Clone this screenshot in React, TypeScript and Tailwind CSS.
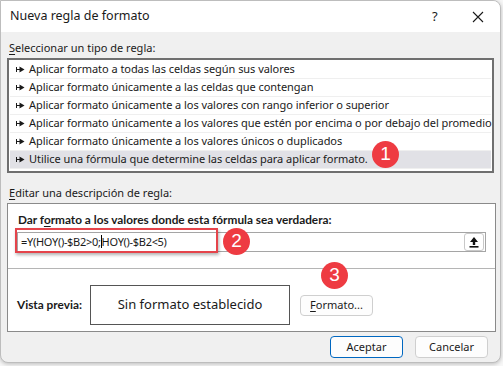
const FONT = "font-['Segoe_UI','Noto_Sans',sans-serif]";
const BOLD = "font-['Lato',sans-serif] font-bold text-[11.8px]";

const rules = [
  "Aplicar formato a todas las celdas según sus valores",
  "Aplicar formato únicamente a las celdas que contengan",
  "Aplicar formato únicamente a los valores con rango inferior o superior",
  "Aplicar formato únicamente a los valores que estén por encima o por debajo del promedio",
  "Aplicar formato únicamente a los valores únicos o duplicados",
  "Utilice una fórmula que determine las celdas para aplicar formato.",
];

function RuleArrow() {
  return (
    <svg width="9" height="7" viewBox="0 0 9 7" className="shrink-0">
      <path d="M0.5 1v5M0.5 3.5H4" stroke="#1a1a1a" strokeWidth="1" fill="none" />
      <path d="M3.5 0.5L8.5 3.5L3.5 6.5Z" fill="#1a1a1a" />
    </svg>
  );
}

function Badge({ n, className }: { n: string; className: string }) {
  return (
    <div
      className={`absolute flex h-[27px] w-[27px] items-center justify-center rounded-full bg-[#ee3b42] font-['Liberation_Sans',sans-serif] text-[19px] text-white ${className}`}
    >
      {n}
    </div>
  );
}

export default function App() {
  return (
    <div className={`relative h-[366px] w-[503px] overflow-hidden bg-[#f7f7f7] ${FONT} text-[11px] text-[#1a1a1a]`}>
      <div className="flex h-[363px] w-[501px] flex-col overflow-hidden rounded-b-[8px] rounded-tr-[8px] border border-[#bdbdbd] bg-[#f0f0f0] shadow-[0_1px_4px_rgba(0,0,0,0.25)]">
        {/* barra de título */}
        <div className="flex h-[31px] shrink-0 items-center bg-white pl-[9px]">
          <span className="flex-1 text-[12.5px]">Nueva regla de formato</span>
          <span className="w-[30px] text-[13px]">?</span>
          <svg width="12" height="12" viewBox="0 0 12 12" className="mr-[16px] ml-[10px]">
            <path d="M1 1L11 11M11 1L1 11" stroke="#1a1a1a" strokeWidth="1.1" />
          </svg>
        </div>

        <div className="flex flex-1 flex-col px-[6px] pt-[8px]">
          <div className="h-[16px] pl-[2px] leading-[16px]">
            <span className="underline underline-offset-2">S</span>eleccionar un tipo de regla:
          </div>
          <div className="mt-[2px] h-[115px] border-2 border-[#6f6f6f] bg-white p-px">
            {rules.map((r, i) => (
              <div
                key={i}
                className={`flex h-[18px] items-center gap-[4px] border-b border-[#efefef] pl-[6px] tracking-[-0.05px] ${
                  i === 5 ? "bg-[#e1e1e6]" : ""
                }`}
              >
                <RuleArrow />
                <span className="whitespace-nowrap">{r}</span>
              </div>
            ))}
          </div>

          <div className="mt-[12px] h-[16px] pl-[2px] leading-[16px]">
            <span className="underline underline-offset-2">E</span>ditar una descripción de regla:
          </div>
          <div className="mt-[2px] flex h-[129px] w-[489px] flex-col border border-[#8a8a8a] bg-white">
            <div className={`mt-[8px] h-[16px] pl-[10px] leading-[16px] ${BOLD}`}>
              Dar f<span className="underline underline-offset-2">o</span>rmato a los valores donde esta fórmula sea verdadera:
            </div>
            <div className="mx-[9px] mt-[4px] flex h-[20px] items-center border border-[#a5a5a5] pl-[3px] pr-[1px]">
              <span className="flex-1 whitespace-nowrap tracking-[-0.3px]">
                =Y(HOY()-$B2&gt;0;<span className="inline-block h-[13px] w-px translate-y-[2px] bg-black" />HOY()-$B2&lt;5)
              </span>
              <div className="flex h-[18px] w-[20px] items-center justify-center rounded-[3px] border border-[#c8c8c8] bg-white">
                <svg width="10" height="12" viewBox="0 0 10 12">
                  <path d="M5 1L9 6H6.2V9H3.8V6H1Z" fill="#111" />
                  <rect x="0.5" y="10" width="9" height="1.6" fill="#111" />
                </svg>
              </div>
            </div>
            <div className="mt-[16px] h-px bg-[#b5b5b5]" />
            <div className="flex items-center pl-[9px] pt-[16px]">
              <span className={`w-[73px] ${BOLD}`}>Vista previa:</span>
              <div className="flex h-[40px] w-[200px] items-center justify-center border border-[#555] text-[13px]">
                Sin formato establecido
              </div>
              <button className="ml-[10px] h-[21px] w-[73px] rounded-[4px] border border-[#cfcfcf] bg-[#fdfdfd] text-[11px]">
                <span className="underline underline-offset-2">F</span>ormato...
              </button>
            </div>
          </div>

          <div className="mt-[4px] flex justify-end gap-[12px] pr-[6px]">
            <button className="h-[22px] w-[73px] rounded-[4px] border border-[#0067c0] bg-[#fdfdfd] text-[11px]">
              Aceptar
            </button>
            <button className="h-[22px] w-[73px] rounded-[4px] border border-[#cfcfcf] bg-[#fdfdfd] text-[11px]">
              Cancelar
            </button>
          </div>
        </div>
      </div>

      {/* marco rojo de la fórmula */}
      <div className="absolute left-[15px] top-[228px] h-[25px] w-[203px] border-2 border-[#e5444b] shadow-[1px_2px_3px_rgba(0,0,0,0.3)]" />
      <Badge n="1" className="left-[372px] top-[141px]" />
      <Badge n="2" className="left-[223px] top-[228px]" />
      <Badge n="3" className="left-[321px] top-[262px]" />
    </div>
  );
}
